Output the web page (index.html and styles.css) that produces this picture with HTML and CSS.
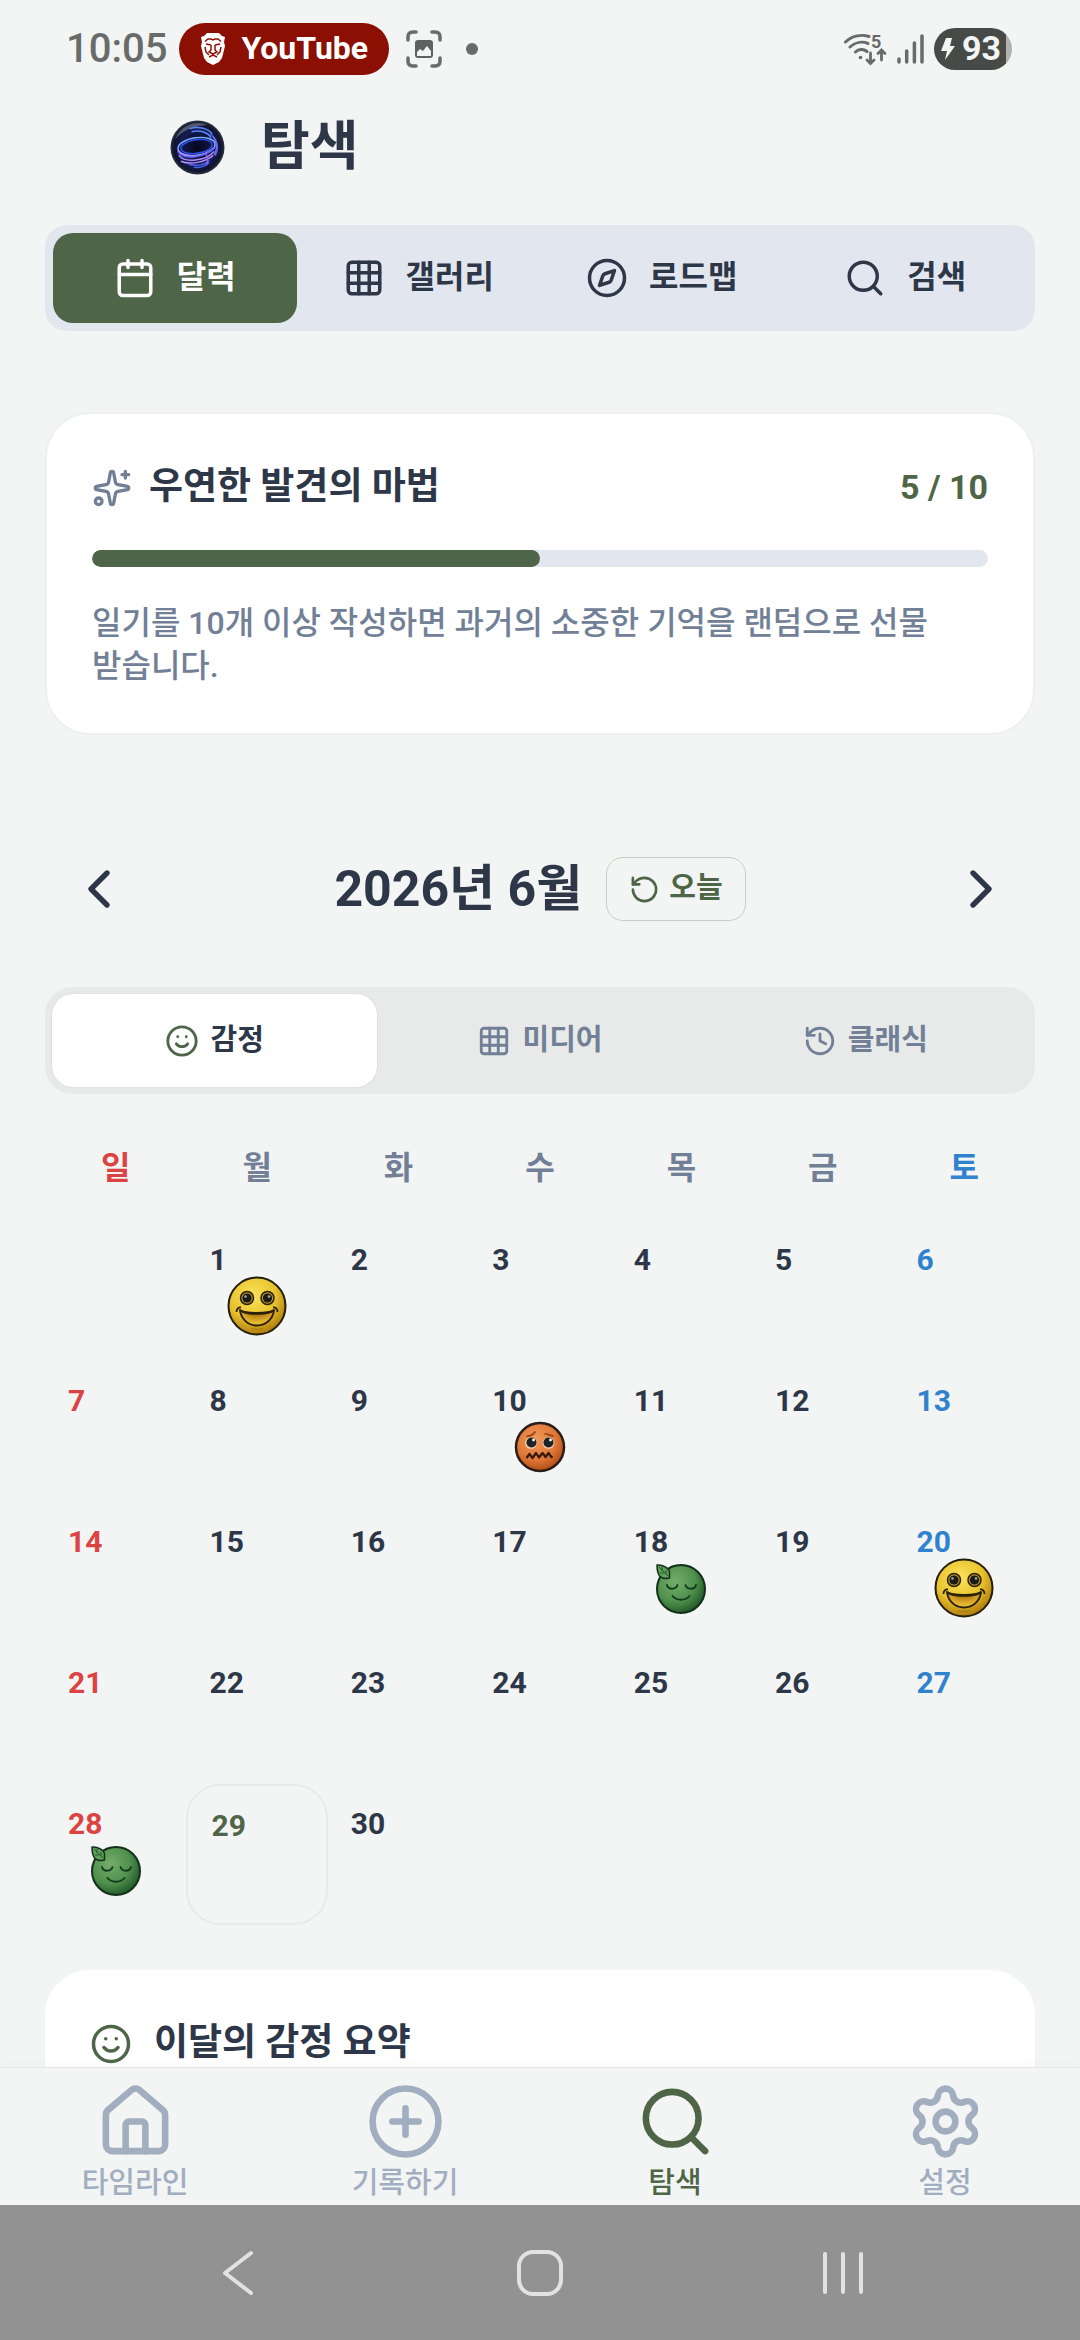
FILE: index.html
```html
<!DOCTYPE html>
<html lang="ko">

<head>
    <meta charset="UTF-8">
    <meta name="viewport" content="width=device-width, initial-scale=1.0">
    <title>탐색</title>
    <link rel="stylesheet" href="styles.css">
</head>

<body>
    <!-- shared icons -->
    <svg class="defs" width="0" height="0" aria-hidden="true">
        <defs>
            <radialGradient id="gold" cx="42%" cy="32%" r="68%">
                <stop offset="0" stop-color="#fbe25c" />
                <stop offset="0.6" stop-color="#e8c32e" />
                <stop offset="1" stop-color="#b07d0c" />
            </radialGradient>
            <radialGradient id="rust" cx="42%" cy="35%" r="68%">
                <stop offset="0" stop-color="#f09a5c" />
                <stop offset="0.6" stop-color="#e07838" />
                <stop offset="1" stop-color="#b04a12" />
            </radialGradient>
            <radialGradient id="moss" cx="38%" cy="35%" r="70%">
                <stop offset="0" stop-color="#74ad6c" />
                <stop offset="0.6" stop-color="#4f8f4c" />
                <stop offset="1" stop-color="#1e5526" />
            </radialGradient>
            <radialGradient id="mouth" cx="50%" cy="20%" r="75%">
                <stop offset="0" stop-color="#a8700c" />
                <stop offset="0.7" stop-color="#e0b02a" />
                <stop offset="1" stop-color="#ecc440" />
            </radialGradient>
            <radialGradient id="night" cx="50%" cy="50%" r="50%">
                <stop offset="0" stop-color="#05051c" />
                <stop offset="0.65" stop-color="#141c52" />
                <stop offset="0.88" stop-color="#10142c" />
                <stop offset="1" stop-color="#2c3648" />
            </radialGradient>
        </defs>
        <symbol id="i-grid" viewBox="0 0 24 24">
            <rect x="3" y="3" width="18" height="18" rx="2" />
            <path d="M3 9h18M3 15h18M9 3v18M15 3v18" />
        </symbol>
        <symbol id="i-search" viewBox="0 0 24 24">
            <circle cx="11" cy="11" r="8" />
            <path d="m21 21-4.3-4.3" />
        </symbol>
        <symbol id="i-smile" viewBox="0 0 24 24">
            <circle cx="12" cy="12" r="10" />
            <path d="M8 14s1.5 2 4 2 4-2 4-2M9 9h.01M15 9h.01" />
        </symbol>
        <symbol id="face-happy" viewBox="0 0 60 60">
            <circle cx="30" cy="30" r="28.5" fill="url(#gold)" stroke="#241d08" stroke-width="2" />
            <g stroke="#2a2108" stroke-width="1.5">
                <circle cx="20" cy="22" r="6.500" fill="#b89420" />
                <circle cx="40.500" cy="22" r="6.500" fill="#b89420" />
            </g>
            <circle cx="20" cy="22" r="4.600" fill="#191a1c" />
            <circle cx="40.500" cy="22" r="4.600" fill="#191a1c" />
            <circle cx="18.500" cy="20.500" r="1.300" fill="#a9acae" />
            <circle cx="42" cy="20.500" r="1.300" fill="#a9acae" />
            <path d="M13 34c5 4 29 4 34 0-1 9-8 15.500-17 15.500s-16-6.500-17-15.500z" fill="url(#mouth)" stroke="#2a2108" stroke-width="2" stroke-linejoin="round" />
            <path d="M15 35.500c7 3 23 3 30 0" fill="none" stroke="#2a2108" stroke-width="2" />
            <path d="M9.500 36c0-3 2-5 4.500-4.500M50.500 36c0-3-2-5-4.500-4.500" fill="none" stroke="#2a2108" stroke-width="1.800" />
            <path d="M24 52.500c4 1.200 8 1.200 12 0" fill="none" stroke="#a87a12" stroke-width="1.200" />
        </symbol>
        <symbol id="face-upset" viewBox="0 0 60 60">
            <circle cx="30" cy="30" r="24" fill="url(#rust)" stroke="#2a1c18" stroke-width="2.500" />
            <path d="M16.500 19.500c4-.5 7-2 9-5M43.500 19.500c-3-1.500-6-2-9-3" fill="none" stroke="#9c4314" stroke-width="1.800" />
            <circle cx="21" cy="26" r="6" fill="#f3c9a4" />
            <circle cx="38.500" cy="26" r="6" fill="#f3c9a4" />
            <circle cx="21.500" cy="25.500" r="5" fill="#1d2226" />
            <circle cx="38.500" cy="25.500" r="5" fill="#1d2226" />
            <circle cx="23.500" cy="23" r="1.400" fill="#fff" />
            <circle cx="40.500" cy="23" r="1.400" fill="#fff" />
            <path d="m16.500 41 3-4 3 4 3.500-5 3 4.500 3.500-4.500 3 4 3-4 2.500 3.500 1.500 1" fill="none" stroke="#33180c" stroke-width="2.200" stroke-linejoin="round" />
        </symbol>
        <symbol id="face-calm" viewBox="0 0 60 60">
            <circle cx="30" cy="31" r="24" fill="url(#moss)" stroke="#12301a" stroke-width="2" />
            <path d="M6 7c6-.5 12 3 12.500 7v6c-4 1-8 0-10-2-2-3-2.500-7-2.500-11z" fill="#5fa05a" stroke="#12301a" stroke-width="1.500" stroke-linejoin="round" />
            <path d="m8 9 9 9M11 9v4M15 12v4M9 15h4" fill="none" stroke="#23562a" stroke-width="1" />
            <path d="M16 27c1 5 9 5 10.500 0M34.500 27c1.500 5 9.500 5 10.500 0M21.500 38c4 5 13 5 17 0" fill="none" stroke="#143a1c" stroke-width="1.800" stroke-linecap="round" />
        </symbol>
    </svg>

    <div class="status-bar">
        <div class="status-left">
            <span class="clock">10:05</span>
            <span class="app-pill">
                <svg width="26" height="32" viewBox="0 0 26 32" aria-hidden="true">
                    <path d="M7 0h12l3 3 3 1-1 5 1 4-3 12-3 4-6 3-6-3-3-4L1 13l1-4-1-5 3-1z" fill="#fff" />
                    <path d="M5 8.500 8 6h3l2 1 2-1h3l3 2.500M6 11l5 1M20 11l-5 1M11 12v5l-2 2 4 2 4-2-2-2v-5M5 14l1 5 3 3M21 14l-1 5-3 3M9 24l4-2 4 2" fill="none" stroke="#8b0f02" stroke-width="1.500" />
                </svg>
                YouTube
            </span>
            <svg class="capture" width="36" height="38" viewBox="0 0 36 38" fill="none" aria-hidden="true">
                <path d="M2 10V7q0-5 5-5h3M26 2h3q5 0 5 5v3M34 28v3q0 5-5 5h-3M10 36H7q-5 0-5-5v-3" stroke="#686b69" stroke-width="3.500" stroke-linecap="round" />
                <rect x="9" y="10" width="18" height="18" rx="3" fill="#5e615f" />
                <path d="M11 26v-4l3-3 3 2 4-5 4 5v5z" fill="#f3f5f4" />
            </svg>
            <span class="dot"></span>
        </div>
        <div class="status-right">
            <svg width="43" height="40" viewBox="0 -4 43 40" fill="none" stroke="#686b69" stroke-width="3" stroke-linecap="round" aria-hidden="true">
                <path d="M1.500 9C8 3 17 1 25 3.500M6 14c5-4.500 12-6 18-3.500M11.500 19c3-3 8-3.500 11.500-.5" />
                <circle cx="16.500" cy="24.500" r="1.800" fill="#686b69" stroke="none" />
                <path d="M26.500 20v10M23 27l3.500 3.500L30 27M37.500 27V18M34 20.500l3.500-3.500 3.500 3.500" stroke-width="2.800" />
                <text class="wifi-gen" x="27" y="15">5</text>
            </svg>
            <svg width="27" height="30" viewBox="0 0 27 30" stroke="#686b69" stroke-width="3.500" stroke-linecap="round" aria-hidden="true">
                <path d="M2 25v3M9.700 17v11M17.400 9v19M25 2v26" />
            </svg>
            <span class="battery">
                <svg width="14" height="22" viewBox="0 0 14 22" aria-hidden="true">
                    <path d="M5 0h6L9 8h5L4 22l2-9H0z" fill="#f3f5f4" />
                </svg>
                93
            </span>
        </div>
    </div>

    <main>
        <header class="page-header">
            <svg width="55" height="55" viewBox="0 0 56 56" fill="none" aria-hidden="true">
                <circle cx="28" cy="28" r="27.500" fill="url(#night)" />
                <path d="M5 20A25 25 0 0 1 38 5C26 6 12 10 5 20z" fill="#8e9bb0" opacity=".5" />
                <path d="M20 9c8-3 18-1 23 5M22 12c8-2 16 0 20 6" stroke="#5a86ff" stroke-width="1.500" />
                <ellipse cx="27" cy="27" rx="19" ry="9" stroke="#7fb2ff" stroke-width="1.500" transform="rotate(-8 27 27)" />
                <ellipse cx="27" cy="27" rx="16" ry="7" stroke="#2f53f0" stroke-width="1.500" transform="rotate(-8 27 27)" />
                <path d="M8 31c6 8 26 8 37-3M9 36c6 8 27 6 36-4M11 42c10 4 25 1 33-6" stroke="#b58cff" stroke-width="1.500" />
                <path d="M8 33c6 8 27 6 38-5M41 14c7 6 9 14 5 22M19 45c8 2 16 1 21-4M24 48c6 1 12-1 16-5" stroke="#4c63f5" stroke-width="1.500" />
                <path d="M44 17c4 6 4 13 1 19M36 33c1 4 4 6 1 13" stroke="#8d6ff0" stroke-width="1.200" />
            </svg>
            <h1>탐색</h1>
        </header>

        <nav class="tabs">
            <button type="button" class="tab active">
                <svg class="icon" viewBox="0 0 24 24"><path d="M8 2v4M16 2v4M3 10h18" /><rect x="3" y="4" width="18" height="18" rx="2" /></svg>
                달력
            </button>
            <button type="button" class="tab">
                <svg class="icon"><use href="#i-grid" /></svg>
                갤러리
            </button>
            <button type="button" class="tab">
                <svg class="icon" viewBox="0 0 24 24"><circle cx="12" cy="12" r="10" /><path d="m16.240 7.760-1.804 5.411a2 2 0 0 1-1.265 1.265L7.760 16.240l1.804-5.411a2 2 0 0 1 1.265-1.265z" /></svg>
                로드맵
            </button>
            <button type="button" class="tab">
                <svg class="icon"><use href="#i-search" /></svg>
                검색
            </button>
        </nav>

        <section class="card discovery">
            <div class="card-head">
                <svg class="icon icon-muted" viewBox="0 0 24 24"><path d="M11.017 2.814a1 1 0 0 1 1.966 0l1.051 5.558a2 2 0 0 0 1.594 1.594l5.558 1.051a1 1 0 0 1 0 1.966l-5.558 1.051a2 2 0 0 0-1.594 1.594l-1.051 5.558a1 1 0 0 1-1.966 0l-1.051-5.558a2 2 0 0 0-1.594-1.594l-5.558-1.051a1 1 0 0 1 0-1.966l5.558-1.051a2 2 0 0 0 1.594-1.594zM20 2v4M22 4h-4" /><circle cx="4" cy="20" r="2" /></svg>
                <h2>우연한 발견의 마법</h2>
                <span class="count">5 / 10</span>
            </div>
            <div class="progress">
                <div class="progress-fill" style="width: 50%"></div>
            </div>
            <p>일기를 10개 이상 작성하면 과거의 소중한 기억을 랜덤으로 선물 받습니다.</p>
        </section>

        <div class="month-nav">
            <button type="button" class="arrow" aria-label="이전 달">
                <svg viewBox="0 0 24 24"><path d="m15 18-6-6 6-6" /></svg>
            </button>
            <div class="month">
                <h2>2026년 6월</h2>
                <button type="button" class="today-btn">
                    <svg class="icon" viewBox="0 0 24 24"><path d="M3 12a9 9 0 1 0 9-9 9.750 9.750 0 0 0-6.740 2.740L3 8" /><path d="M3 3v5h5" /></svg>
                    오늘
                </button>
            </div>
            <button type="button" class="arrow" aria-label="다음 달">
                <svg viewBox="0 0 24 24"><path d="m9 18 6-6-6-6" /></svg>
            </button>
        </div>

        <div class="modes">
            <button type="button" class="mode active">
                <svg class="icon"><use href="#i-smile" /></svg>
                감정
            </button>
            <button type="button" class="mode">
                <svg class="icon"><use href="#i-grid" /></svg>
                미디어
            </button>
            <button type="button" class="mode">
                <svg class="icon" viewBox="0 0 24 24"><path d="M3 12a9 9 0 1 0 9-9 9.750 9.750 0 0 0-6.740 2.740L3 8" /><path d="M3 3v5h5M12 7v5l4 2" /></svg>
                클래식
            </button>
        </div>

        <table class="calendar">
            <thead>
                <tr>
                    <th>일</th>
                    <th>월</th>
                    <th>화</th>
                    <th>수</th>
                    <th>목</th>
                    <th>금</th>
                    <th>토</th>
                </tr>
            </thead>
            <tbody>
                <tr>
                    <td></td>
                    <td><button type="button" class="day">1<svg class="face"><use href="#face-happy" /></svg></button></td>
                    <td><button type="button" class="day">2</button></td>
                    <td><button type="button" class="day">3</button></td>
                    <td><button type="button" class="day">4</button></td>
                    <td><button type="button" class="day">5</button></td>
                    <td><button type="button" class="day">6</button></td>
                </tr>
                <tr>
                    <td><button type="button" class="day">7</button></td>
                    <td><button type="button" class="day">8</button></td>
                    <td><button type="button" class="day">9</button></td>
                    <td><button type="button" class="day">10<svg class="face"><use href="#face-upset" /></svg></button></td>
                    <td><button type="button" class="day">11</button></td>
                    <td><button type="button" class="day">12</button></td>
                    <td><button type="button" class="day">13</button></td>
                </tr>
                <tr>
                    <td><button type="button" class="day">14</button></td>
                    <td><button type="button" class="day">15</button></td>
                    <td><button type="button" class="day">16</button></td>
                    <td><button type="button" class="day">17</button></td>
                    <td><button type="button" class="day">18<svg class="face"><use href="#face-calm" /></svg></button></td>
                    <td><button type="button" class="day">19</button></td>
                    <td><button type="button" class="day">20<svg class="face"><use href="#face-happy" /></svg></button></td>
                </tr>
                <tr>
                    <td><button type="button" class="day">21</button></td>
                    <td><button type="button" class="day">22</button></td>
                    <td><button type="button" class="day">23</button></td>
                    <td><button type="button" class="day">24</button></td>
                    <td><button type="button" class="day">25</button></td>
                    <td><button type="button" class="day">26</button></td>
                    <td><button type="button" class="day">27</button></td>
                </tr>
                <tr>
                    <td><button type="button" class="day">28<svg class="face"><use href="#face-calm" /></svg></button></td>
                    <td><button type="button" class="day today">29</button></td>
                    <td><button type="button" class="day">30</button></td>
                    <td></td>
                    <td></td>
                    <td></td>
                    <td></td>
                </tr>
            </tbody>
        </table>

        <section class="card summary">
            <div class="card-head">
                <svg class="icon"><use href="#i-smile" /></svg>
                <h2>이달의 감정 요약</h2>
            </div>
        </section>
    </main>

    <nav class="bottom-nav">
        <a href="#timeline">
            <svg class="icon" viewBox="0 0 24 24"><path d="M15 21v-8a1 1 0 0 0-1-1h-4a1 1 0 0 0-1 1v8" /><path d="M3 10a2 2 0 0 1 .709-1.528l7-5.999a2 2 0 0 1 2.582 0l7 5.999A2 2 0 0 1 21 10v9a2 2 0 0 1-2 2H5a2 2 0 0 1-2-2z" /></svg>
            타임라인
        </a>
        <a href="#write">
            <svg class="icon" viewBox="0 0 24 24"><circle cx="12" cy="12" r="10" /><path d="M8 12h8M12 8v8" /></svg>
            기록하기
        </a>
        <a href="#explore" class="active">
            <svg class="icon"><use href="#i-search" /></svg>
            탐색
        </a>
        <a href="#settings">
            <svg class="icon" viewBox="0 0 24 24"><path d="M9.671 4.136a2.340 2.340 0 0 1 4.659 0 2.340 2.340 0 0 0 3.319 1.915 2.340 2.340 0 0 1 2.330 4.033 2.340 2.340 0 0 0 0 3.831 2.340 2.340 0 0 1-2.330 4.033 2.340 2.340 0 0 0-3.319 1.915 2.340 2.340 0 0 1-4.659 0 2.340 2.340 0 0 0-3.320-1.915 2.340 2.340 0 0 1-2.330-4.033 2.340 2.340 0 0 0 0-3.831A2.340 2.340 0 0 1 6.350 6.051a2.340 2.340 0 0 0 3.319-1.915" /><circle cx="12" cy="12" r="3" /></svg>
            설정
        </a>
    </nav>

    <div class="system-bar">
        <button type="button" aria-label="뒤로">
            <svg viewBox="0 0 48 48"><path d="M38 4 12 24l26 20" /></svg>
        </button>
        <button type="button" aria-label="홈">
            <svg viewBox="0 0 48 48"><rect x="3" y="3" width="42" height="42" rx="14" /></svg>
        </button>
        <button type="button" aria-label="최근 앱">
            <svg viewBox="0 0 48 48"><path d="M6 5v38M24 5v38M42 5v38" /></svg>
        </button>
    </div>
</body>

</html>
```
FILE: styles.css
```css
:root {
    --bg: #f3f5f4;
    --text: #2d3748;
    --muted: #718096;
    --light: #a0aec0;
    --green: #4e6547;
    --track: #e2e6ef;
    --line: #e8eae9;
}

* {
    box-sizing: border-box;
}

body {
    background-color: var(--bg);
    color: var(--text);
    font-family: Roboto, "Noto Sans CJK KR", sans-serif;
    line-height: 1.3;
    margin: 0;
    height: 100vh;
    display: flex;
    flex-direction: column;
}

button {
    background: none;
    border: 0;
    color: inherit;
    font-family: inherit;
    line-height: inherit;
    margin: 0;
    padding: 0;
}

h1,
h2,
p {
    margin: 0;
}

.defs {
    position: absolute;
}

.icon {
    width: 42px;
    height: 42px;
    flex: none;
    fill: none;
    stroke: currentColor;
    stroke-width: 2;
    stroke-linecap: round;
    stroke-linejoin: round;
}

/* status bar */
.status-bar {
    display: flex;
    flex: none;
    justify-content: space-between;
    align-items: center;
    height: 97px;
    padding: 0 68px 0 66px;
    color: #686b69;
}

.status-left,
.status-right {
    display: flex;
    align-items: center;
}

.status-right {
    gap: 10px;
}

.clock {
    font-size: 40px;
    font-weight: 500;
    margin-right: 12px;
}

.app-pill {
    display: flex;
    align-items: center;
    gap: 15px;
    height: 52px;
    padding: 0 21px;
    border-radius: 26px;
    background-color: #8b0f02;
    color: #fff;
    font-size: 32px;
    font-weight: 700;
}

.capture {
    margin: 0 24px 0 17px;
}

.dot {
    width: 12px;
    height: 12px;
    border-radius: 50%;
    background-color: #686b69;
}

.wifi-gen {
    fill: #686b69;
    stroke: none;
    font-size: 18px;
    font-weight: 700;
}

.battery {
    display: flex;
    align-items: center;
    justify-content: center;
    gap: 7px;
    width: 78px;
    height: 42px;
    padding-right: 4px;
    border-radius: 21px;
    background: linear-gradient(to right, #484a48 92%, #b0b2b1 92%);
    color: var(--bg);
    font-size: 34px;
    font-weight: 700;
}

/* content */
main {
    flex: 1;
    min-height: 0;
    overflow: hidden;
    padding: 0 45px;
}

.page-header {
    display: flex;
    align-items: center;
    gap: 36px;
    height: 100px;
    margin-bottom: 28px;
    padding-left: 125px;
}

.page-header h1 {
    font-size: 53px;
    font-weight: 700;
}

.tabs {
    display: flex;
    padding: 8px;
    border-radius: 22px;
    background-color: var(--track);
}

.tab {
    flex: 1;
    display: flex;
    align-items: center;
    justify-content: center;
    gap: 21px;
    height: 90px;
    border-radius: 20px;
    font-size: 32px;
    font-weight: 700;
}

.tab.active {
    background-color: var(--green);
    color: #fff;
}

.card {
    border-radius: 45px;
    background-color: #fff;
    padding: 45px;
}

.card-head {
    display: flex;
    align-items: center;
    height: 57px;
}

.card-head h2 {
    font-size: 37px;
    font-weight: 700;
}

.discovery {
    margin-top: 81px;
    border: 2px solid #eef0ef;
}

.discovery .icon {
    width: 40px;
    height: 40px;
    color: var(--muted);
    margin-right: 17px;
}

.count {
    margin-left: auto;
    color: var(--green);
    font-size: 34px;
    font-weight: 700;
}

.progress {
    height: 17px;
    margin: 34px 0 35px;
    border-radius: 9px;
    background-color: var(--track);
    overflow: hidden;
}

.progress-fill {
    height: 100%;
    border-radius: 9px;
    background-color: var(--green);
}

.discovery p {
    color: var(--muted);
    font-size: 32px;
    font-weight: 500;
    line-height: 43px;
    word-break: keep-all;
}

/* month switcher */
.month-nav {
    display: flex;
    align-items: center;
    justify-content: space-between;
    margin: 122px 22px 66px;
}

.arrow {
    height: 64px;
}

.arrow svg {
    display: block;
    width: 64px;
    height: 64px;
    fill: none;
    stroke: var(--text);
    stroke-width: 2;
    stroke-linecap: round;
    stroke-linejoin: round;
}

.month {
    display: flex;
    align-items: center;
    gap: 24px;
}

.month h2 {
    font-size: 50px;
    font-weight: 700;
    line-height: 64px;
}

.today-btn {
    display: flex;
    align-items: center;
    gap: 9px;
    height: 64px;
    padding: 0 22px;
    border: 1px solid #c9cfc6;
    border-radius: 17px;
    color: var(--green);
    font-size: 29px;
    font-weight: 700;
}

.today-btn .icon {
    width: 31px;
    height: 31px;
}

.modes {
    display: flex;
    padding: 7px;
    border-radius: 27px;
    background-color: var(--line);
}

.mode {
    flex: 1;
    display: flex;
    align-items: center;
    justify-content: center;
    gap: 11px;
    height: 93px;
    border-radius: 21px;
    color: var(--muted);
    font-size: 29px;
    font-weight: 700;
}

.mode .icon {
    width: 34px;
    height: 34px;
}

.mode.active {
    background-color: #fff;
    color: var(--text);
    box-shadow: 0 0 2px rgba(0, 0, 0, 0.12);
}

.mode.active .icon,
.summary .icon {
    color: var(--green);
}

/* calendar */
.calendar {
    width: 100%;
    margin: 24px 0 45px;
    border-collapse: collapse;
    table-layout: fixed;
}

.calendar th {
    height: 102px;
    padding: 0;
    color: var(--muted);
    font-size: 32px;
    font-weight: 700;
}

.calendar td {
    height: 141px;
    padding: 0;
}

.calendar th:first-child,
.calendar td:first-child {
    color: #dc4444;
}

.calendar th:last-child,
.calendar td:last-child {
    color: #3182ce;
}

.day {
    display: flex;
    flex-direction: column;
    width: 100%;
    height: 141px;
    padding: 24px 23px 0;
    font-size: 30px;
    font-weight: 700;
    line-height: 32px;
    text-align: left;
}

.day.today {
    border: 2px solid var(--line);
    border-radius: 34px;
    color: var(--green);
}

.face {
    align-self: center;
    width: 60px;
    height: 60px;
}

.summary .card-head {
    gap: 22px;
}

/* bottom navigation */
.bottom-nav {
    position: relative;
    display: flex;
    flex: none;
    padding-top: 14px;
    border-top: 1px solid #e4e7e6;
    background-color: var(--bg);
    box-shadow: 0 -4px 12px rgba(0, 0, 0, 0.02);
}

.bottom-nav a {
    flex: 1;
    display: flex;
    flex-direction: column;
    align-items: center;
    color: var(--light);
    font-size: 29px;
    font-weight: 500;
    line-height: 44px;
    text-decoration: none;
}

.bottom-nav a.active {
    color: var(--green);
}

.bottom-nav .icon {
    width: 79px;
    height: 79px;
}

.system-bar {
    display: flex;
    flex: none;
    align-items: center;
    height: 135px;
    padding: 0 86px;
    background-color: #929292;
}

.system-bar button {
    flex: 1;
    display: flex;
    justify-content: center;
}

.system-bar svg {
    width: 48px;
    height: 48px;
    fill: none;
    stroke: #e2e2e2;
    stroke-width: 4;
    stroke-linecap: round;
    stroke-linejoin: round;
}
```
